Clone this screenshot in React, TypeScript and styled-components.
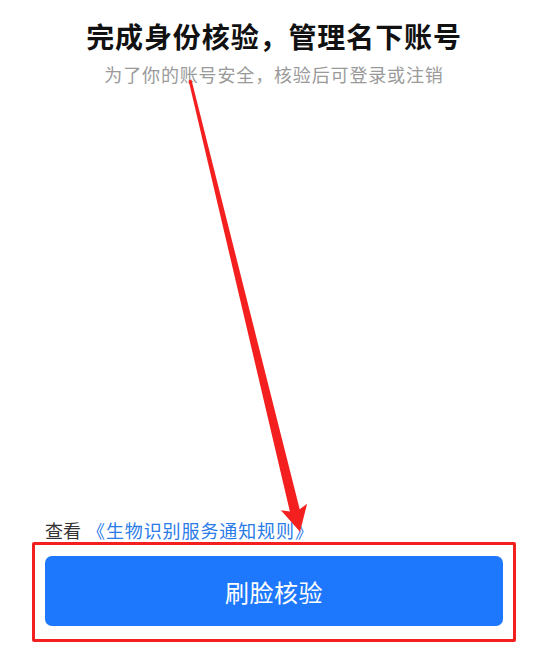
import React from 'react'
import styled, { createGlobalStyle } from 'styled-components'

const GlobalStyle = createGlobalStyle`
  html, body {
    margin: 0;
    padding: 0;
    background: #ffffff;
  }
  body {
    font-family: "Noto Sans CJK SC", "Noto Sans", sans-serif;
  }
`

const Page = styled.div`
  position: relative;
  height: 100vh;
  display: flex;
  flex-direction: column;
  align-items: center;
  box-sizing: border-box;
  padding: 16px 0 5px 9px;
  overflow: hidden;
`

const Title = styled.h1`
  margin: 0;
  font-size: 28px;
  line-height: 40px;
  font-weight: 700;
  color: #111111;
  letter-spacing: 0.9px;
`

const Subtitle = styled.p`
  margin: 3px 0 0;
  font-size: 18px;
  line-height: 30px;
  color: #9a9a9a;
  letter-spacing: 0.85px;
`

const Spacer = styled.div`
  flex: 1;
`

const AgreementRow = styled.div`
  align-self: stretch;
  padding: 0 0 0 36px;
  font-size: 18px;
  line-height: 24px;
  color: #333333;
`

const PolicyLink = styled.a`
  color: #2a7be8;
  text-decoration: none;
  margin-left: 6px;
  letter-spacing: 0.9px;
`

const HighlightBox = styled.div`
  align-self: center;
  width: 484px;
  box-sizing: border-box;
  padding: 11px 10px 13px;
  border: 3px solid #f42020;
  border-radius: 2px;
`

const FaceButton = styled.button`
  display: flex;
  align-items: center;
  justify-content: center;
  width: 100%;
  height: 70px;
  border: none;
  border-radius: 7px;
  background: #1e78fd;
  color: #ffffff;
  font-family: "Noto Sans CJK SC", "Noto Sans", sans-serif;
  font-size: 24px;
  letter-spacing: 0.5px;
  cursor: pointer;
`

const ArrowLayer = styled.svg`
  position: absolute;
  top: 0;
  left: 0;
  pointer-events: none;
`

export default function App() {
  return (
    <>
      <GlobalStyle />
      <Page>
        <Title>完成身份核验，管理名下账号</Title>
        <Subtitle>为了你的账号安全，核验后可登录或注销</Subtitle>
        <Spacer />
        <AgreementRow>
          查看<PolicyLink href="#">《生物识别服务通知规则》</PolicyLink>
        </AgreementRow>
        <HighlightBox>
          <FaceButton>刷脸核验</FaceButton>
        </HighlightBox>

        {/* annotation arrow drawn over the page */}
        <ArrowLayer width="539" height="647" viewBox="0 0 539 647">
          <polygon
            fill="#f42020"
            points="188.6,80.4 289.9,511.6 280.9,510.2 300,531.8 307.1,503.8 299.7,509.2 191.4,79.6"
          />
        </ArrowLayer>
      </Page>
    </>
  )
}
